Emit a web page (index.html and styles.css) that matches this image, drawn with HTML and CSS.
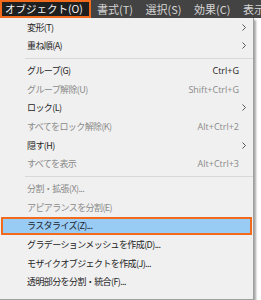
FILE: index.html
```html
<!DOCTYPE html>
<html lang="ja">
<head>
    <meta charset="UTF-8">
    <title>オブジェクト メニュー</title>
    <link rel="stylesheet" href="styles.css">
</head>
<body>
    <div class="menubar">
        <div class="menubar-item active">オブジェクト(O)</div>
        <div class="menubar-item">書式(T)</div>
        <div class="menubar-item">選択(S)</div>
        <div class="menubar-item">効果(C)</div>
        <div class="menubar-item">表示(V)</div>
    </div>

    <div class="menu">
        <div class="item"><span class="label">変形(T)</span><svg class="arrow" viewBox="0 0 4 7"><path d="M0.5 0.5 L3.5 3.5 L0.5 6.5"/></svg></div>
        <div class="item"><span class="label">重ね順(A)</span><svg class="arrow" viewBox="0 0 4 7"><path d="M0.5 0.5 L3.5 3.5 L0.5 6.5"/></svg></div>
        <div class="sep"></div>
        <div class="item"><span class="label">グループ(G)</span><span class="key">Ctrl+G</span></div>
        <div class="item disabled"><span class="label">グループ解除(U)</span><span class="key">Shift+Ctrl+G</span></div>
        <div class="item"><span class="label">ロック(L)</span><svg class="arrow" viewBox="0 0 4 7"><path d="M0.5 0.5 L3.5 3.5 L0.5 6.5"/></svg></div>
        <div class="item disabled"><span class="label">すべてをロック解除(K)</span><span class="key">Alt+Ctrl+2</span></div>
        <div class="item"><span class="label">隠す(H)</span><svg class="arrow" viewBox="0 0 4 7"><path d="M0.5 0.5 L3.5 3.5 L0.5 6.5"/></svg></div>
        <div class="item disabled"><span class="label">すべてを表示</span><span class="key">Alt+Ctrl+3</span></div>
        <div class="sep"></div>
        <div class="item disabled"><span class="label">分割・拡張(X)...</span></div>
        <div class="item disabled"><span class="label">アピアランスを分割(E)</span></div>
        <div class="item selected"><span class="label">ラスタライズ(Z)...</span></div>
        <div class="item"><span class="label">グラデーションメッシュを作成(D)...</span></div>
        <div class="item"><span class="label">モザイクオブジェクトを作成(J)...</span></div>
        <div class="item"><span class="label">透明部分を分割・統合(F)...</span></div>
    </div>
</body>
</html>
```

FILE: styles.css
```css
body {
    margin: 0;
    width: 261px;
    height: 300px;
    overflow: hidden;
    background-color: #ffffff;
    font-family: "Noto Sans CJK JP", "Noto Sans", sans-serif;
}

.menubar {
    display: flex;
    height: 18px;
    background-color: #434343;
    white-space: nowrap;
    overflow: hidden;
}

.menubar-item {
    flex-shrink: 0;
    padding: 0 6.5px 0 6px;
    font-size: 11px;
    line-height: 18px;
    color: #d4d4d4;
}

.menubar-item.active {
    width: 91px;
    padding: 0 0 0 3px;
    box-sizing: border-box;
    background-color: #1f1f1f;
    color: #f0f0f0;
    border: 2px solid #f26b1d;
    font-size: 10.5px;
    line-height: 14px;
}

.menu {
    width: 253px;
    padding: 0 0 8px;
    background-color: #f0f0f0;
    border-right: 1px solid #a0a0a0;
    border-bottom: 1px solid #a0a0a0;
    box-shadow: 2px 2px 2px rgba(0, 0, 0, 0.35);
}

.item {
    display: flex;
    align-items: center;
    height: 18.6px;
    padding: 0 7px 0 27px;
    box-sizing: border-box;
    font-size: 9px;
    letter-spacing: -0.6px;
    color: #1e1e1e;
    white-space: nowrap;
}

.item.disabled {
    color: #8a8a8a;
}

.item .label {
    flex: 1;
}

.item .key {
    margin-right: 7px;
    font-family: "Open Sans", sans-serif;
    font-size: 9px;
    letter-spacing: 0;
}

.item .arrow {
    width: 4px;
    height: 7px;
    fill: none;
    stroke: #555555;
    stroke-width: 1;
}

.item.selected {
    margin: 0 1px;
    padding-left: 24px;
    background-color: #99ccf5;
    border: 2px solid #f26b1d;
    color: #1a1a2a;
}

.sep {
    height: 1px;
    margin: 3px 0 2.3px 25px;
    background-color: #d8d8d8;
}
```
